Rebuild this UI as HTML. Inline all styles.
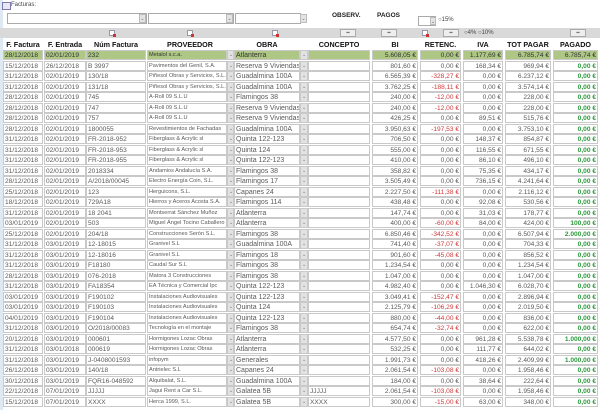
<!DOCTYPE html>
<html><head><meta charset="utf-8"><style>
body{margin:0;width:600px;height:410px;overflow:hidden;background:#fff;font-family:"Liberation Sans",sans-serif;position:relative}
.a{position:absolute}
.t{font-size:6px;color:#444;top:2px;left:11px}
.inp{position:absolute;border:1px solid #aaa;background:#fff;box-sizing:border-box}
.dd{position:absolute;background:#e4e4e4;border:1px solid #bbb;box-sizing:border-box;font-size:5px;color:#666;text-align:center;line-height:8px}
.band{position:absolute;left:0;top:28px;width:600px;height:10px;background:#d9d9d9}
.btn{position:absolute;top:29px;width:16px;height:8px;border:1px solid #aaa;background:#eee;box-sizing:border-box;font-size:5px;text-align:center;line-height:6px;color:#555}
.ico{position:absolute;top:30px;width:6px;height:6px;background:#fff;border:1px solid #99a;box-sizing:border-box}
.ico:after{content:"";position:absolute;right:-2px;bottom:-2px;width:3px;height:3px;background:#c33}
.h{position:absolute;top:40px;font-size:7.2px;font-weight:bold;color:#111;text-align:center}
.r{position:absolute;left:0;width:600px;height:10.5px}
.r div{position:absolute;top:0;height:10px;border:1px solid #c9c9c9;box-sizing:border-box;background:#fff;font-size:6.6px;line-height:9px;color:#5a5a5a;white-space:nowrap;overflow:hidden;padding:0 1px}
.r .c1{left:3px;width:40px}.r .c2{left:44px;width:42px}.r .c3{left:86px;width:60px}
.r .c4{left:147px;width:80px;font-size:5.6px}.r .d1{left:227px;width:7px;background:#e2e2e2;color:#777;font-size:5px;text-align:center}
.r .c5{left:234px;width:66px;font-size:7px}.r .d2{left:300px;width:8px;background:#e2e2e2;color:#777;font-size:5px;text-align:center}
.r .c6{left:308px;width:62px}
.r .c7{left:372px;width:46px;text-align:right}.r .c8{left:420px;width:41px;text-align:right}
.r .c9{left:463px;width:40px;text-align:right}.r .c10{left:505px;width:46px;text-align:right}
.r .c11{left:553px;width:45px;text-align:right;color:#2a9a3a;font-weight:bold}
.r .n{color:#d03a3a}
.g div{background:#aec784;color:#333}.g .c11{color:#333;font-weight:normal}
.g .d1,.g .d2{background:#e2e2e2}
</style></head><body>
<div class="a" style="left:0;top:0;width:3px;height:410px;background:#dfe9f3"></div>
<div class="a" style="left:2px;top:2px;width:7px;height:6px;border:1px solid #7a7ab0;background:#e8e8f4"></div>
<div class="a t">Facturas:</div>
<div class="inp" style="left:7px;top:13px;width:140px;height:11px"></div>
<div class="dd" style="left:139px;top:14px;width:7px;height:9px">⌄</div>
<div class="inp" style="left:148px;top:13px;width:86px;height:11px"></div>
<div class="dd" style="left:226px;top:14px;width:7px;height:9px">⌄</div>
<div class="inp" style="left:235px;top:13px;width:66px;height:11px"></div>
<div class="dd" style="left:300px;top:14px;width:7px;height:9px">⌄</div>
<div class="a" style="left:332px;top:12px;font-size:6.5px;font-weight:bold;color:#222">OBSERV.</div>
<div class="a" style="left:377px;top:12px;font-size:6.5px;font-weight:bold;color:#222">PAGOS</div>
<div class="inp" style="left:418px;top:16px;width:18px;height:10px"></div>
<div class="dd" style="left:430px;top:17px;width:6px;height:8px">⌄</div>
<div class="a" style="left:438px;top:17px;font-size:6px;color:#444">○15%</div>
<div class="band"></div>
<div class="ico" style="left:109px"></div><div class="ico" style="left:187px"></div><div class="ico" style="left:272px"></div><div class="ico" style="left:422px"></div>
<div class="btn" style="left:340px">▪▪</div><div class="btn" style="left:381px">▪▪</div><div class="btn" style="left:443px">▪▪</div><div class="btn" style="left:570px">▪▪</div>
<div class="a" style="left:464px;top:30px;font-size:6px;color:#444">○4% ○10%</div>
<div class="h" style="left:3px;width:40px">F. Factura</div>
<div class="h" style="left:44px;width:42px">F. Entrada</div>
<div class="h" style="left:86px;width:60px">Núm Factura</div>
<div class="h" style="left:147px;width:86px">PROVEEDOR</div>
<div class="h" style="left:234px;width:66px">OBRA</div>
<div class="h" style="left:308px;width:62px">CONCEPTO</div>
<div class="h" style="left:372px;width:46px">BI</div>
<div class="h" style="left:420px;width:41px">RETENC.</div>
<div class="h" style="left:463px;width:40px">IVA</div>
<div class="h" style="left:505px;width:46px">TOT PAGAR</div>
<div class="h" style="left:553px;width:45px">PAGADO</div>

<div class="r g" style="top:50px"><div class="c1">28/12/2018</div><div class="c2">02/01/2019</div><div class="c3">232</div><div class="c4">Metalol s.c.a.</div><div class="d1">⌄</div><div class="c5">Atlanterra</div><div class="d2">⌄</div><div class="c6"></div><div class="c7">5.608,05 €</div><div class="c8">0,00 €</div><div class="c9">1.177,69 €</div><div class="c10">6.785,74 €</div><div class="c11">6.785,74 €</div></div>
<div class="r" style="top:60.5px"><div class="c1">15/12/2018</div><div class="c2">26/12/2018</div><div class="c3">B 3997</div><div class="c4">Pavimentos del Genil, S.A.</div><div class="d1">⌄</div><div class="c5">Reserva 9 Viviendas</div><div class="d2">⌄</div><div class="c6"></div><div class="c7">801,60 €</div><div class="c8">0,00 €</div><div class="c9">168,34 €</div><div class="c10">969,94 €</div><div class="c11">0,00 €</div></div>
<div class="r" style="top:71px"><div class="c1">31/12/2018</div><div class="c2">02/01/2019</div><div class="c3">130/18</div><div class="c4">Piñesol Obras y Servicios, S.L.</div><div class="d1">⌄</div><div class="c5">Guadalmina 100A</div><div class="d2">⌄</div><div class="c6"></div><div class="c7">6.565,39 €</div><div class="c8 n">-328,27 €</div><div class="c9">0,00 €</div><div class="c10">6.237,12 €</div><div class="c11">0,00 €</div></div>
<div class="r" style="top:81.5px"><div class="c1">31/12/2018</div><div class="c2">02/01/2019</div><div class="c3">131/18</div><div class="c4">Piñesol Obras y Servicios, S.L.</div><div class="d1">⌄</div><div class="c5">Guadalmina 100A</div><div class="d2">⌄</div><div class="c6"></div><div class="c7">3.762,25 €</div><div class="c8 n">-188,11 €</div><div class="c9">0,00 €</div><div class="c10">3.574,14 €</div><div class="c11">0,00 €</div></div>
<div class="r" style="top:92px"><div class="c1">28/12/2018</div><div class="c2">02/01/2019</div><div class="c3">745</div><div class="c4">A-Roll 09 S.L.U</div><div class="d1">⌄</div><div class="c5">Flamingos 38</div><div class="d2">⌄</div><div class="c6"></div><div class="c7">240,00 €</div><div class="c8 n">-12,00 €</div><div class="c9">0,00 €</div><div class="c10">228,00 €</div><div class="c11">0,00 €</div></div>
<div class="r" style="top:102.5px"><div class="c1">28/12/2018</div><div class="c2">02/01/2019</div><div class="c3">747</div><div class="c4">A-Roll 09 S.L.U</div><div class="d1">⌄</div><div class="c5">Reserva 9 Viviendas</div><div class="d2">⌄</div><div class="c6"></div><div class="c7">240,00 €</div><div class="c8 n">-12,00 €</div><div class="c9">0,00 €</div><div class="c10">228,00 €</div><div class="c11">0,00 €</div></div>
<div class="r" style="top:113px"><div class="c1">28/12/2018</div><div class="c2">02/01/2019</div><div class="c3">757</div><div class="c4">A-Roll 09 S.L.U</div><div class="d1">⌄</div><div class="c5">Reserva 9 Viviendas</div><div class="d2">⌄</div><div class="c6"></div><div class="c7">426,25 €</div><div class="c8">0,00 €</div><div class="c9">89,51 €</div><div class="c10">515,76 €</div><div class="c11">0,00 €</div></div>
<div class="r" style="top:123.5px"><div class="c1">28/12/2018</div><div class="c2">02/01/2019</div><div class="c3">1800055</div><div class="c4">Revestimientos de Fachadas</div><div class="d1">⌄</div><div class="c5">Guadalmina 100A</div><div class="d2">⌄</div><div class="c6"></div><div class="c7">3.950,63 €</div><div class="c8 n">-197,53 €</div><div class="c9">0,00 €</div><div class="c10">3.753,10 €</div><div class="c11">0,00 €</div></div>
<div class="r" style="top:134px"><div class="c1">31/12/2018</div><div class="c2">02/01/2019</div><div class="c3">FR-2018-952</div><div class="c4">Fiberglass &amp; Acrylic sl</div><div class="d1">⌄</div><div class="c5">Quinta 122-123</div><div class="d2">⌄</div><div class="c6"></div><div class="c7">706,50 €</div><div class="c8">0,00 €</div><div class="c9">148,37 €</div><div class="c10">854,87 €</div><div class="c11">0,00 €</div></div>
<div class="r" style="top:144.5px"><div class="c1">31/12/2018</div><div class="c2">02/01/2019</div><div class="c3">FR-2018-953</div><div class="c4">Fiberglass &amp; Acrylic sl</div><div class="d1">⌄</div><div class="c5">Quinta 124</div><div class="d2">⌄</div><div class="c6"></div><div class="c7">555,00 €</div><div class="c8">0,00 €</div><div class="c9">116,55 €</div><div class="c10">671,55 €</div><div class="c11">0,00 €</div></div>
<div class="r" style="top:155px"><div class="c1">31/12/2018</div><div class="c2">02/01/2019</div><div class="c3">FR-2018-955</div><div class="c4">Fiberglass &amp; Acrylic sl</div><div class="d1">⌄</div><div class="c5">Quinta 122-123</div><div class="d2">⌄</div><div class="c6"></div><div class="c7">410,00 €</div><div class="c8">0,00 €</div><div class="c9">86,10 €</div><div class="c10">496,10 €</div><div class="c11">0,00 €</div></div>
<div class="r" style="top:165.5px"><div class="c1">31/12/2018</div><div class="c2">02/01/2019</div><div class="c3">2018334</div><div class="c4">Andamios Andalucía S.A.</div><div class="d1">⌄</div><div class="c5">Flamingos 38</div><div class="d2">⌄</div><div class="c6"></div><div class="c7">358,82 €</div><div class="c8">0,00 €</div><div class="c9">75,35 €</div><div class="c10">434,17 €</div><div class="c11">0,00 €</div></div>
<div class="r" style="top:176px"><div class="c1">28/12/2018</div><div class="c2">02/01/2019</div><div class="c3">A/2018/00045</div><div class="c4">Electro Energía Coin, S.L.</div><div class="d1">⌄</div><div class="c5">Flamingos 17</div><div class="d2">⌄</div><div class="c6"></div><div class="c7">3.505,49 €</div><div class="c8">0,00 €</div><div class="c9">736,15 €</div><div class="c10">4.241,64 €</div><div class="c11">0,00 €</div></div>
<div class="r" style="top:186.5px"><div class="c1">25/12/2018</div><div class="c2">02/01/2019</div><div class="c3">123</div><div class="c4">Herguicons, S.L.</div><div class="d1">⌄</div><div class="c5">Capanes 24</div><div class="d2">⌄</div><div class="c6"></div><div class="c7">2.227,50 €</div><div class="c8 n">-111,38 €</div><div class="c9">0,00 €</div><div class="c10">2.116,12 €</div><div class="c11">0,00 €</div></div>
<div class="r" style="top:197px"><div class="c1">18/12/2018</div><div class="c2">02/01/2019</div><div class="c3">729A18</div><div class="c4">Hierros y Aceros Acosta S.A.</div><div class="d1">⌄</div><div class="c5">Flamingos 114</div><div class="d2">⌄</div><div class="c6"></div><div class="c7">438,48 €</div><div class="c8">0,00 €</div><div class="c9">92,08 €</div><div class="c10">530,56 €</div><div class="c11">0,00 €</div></div>
<div class="r" style="top:207.5px"><div class="c1">31/12/2018</div><div class="c2">02/01/2019</div><div class="c3">18 2041</div><div class="c4">Montserrat Sánchez Muñoz</div><div class="d1">⌄</div><div class="c5">Atlanterra</div><div class="d2">⌄</div><div class="c6"></div><div class="c7">147,74 €</div><div class="c8">0,00 €</div><div class="c9">31,03 €</div><div class="c10">178,77 €</div><div class="c11">0,00 €</div></div>
<div class="r" style="top:218px"><div class="c1">03/01/2019</div><div class="c2">02/01/2019</div><div class="c3">503</div><div class="c4">Miguel Ángel Tocino Caballero</div><div class="d1">⌄</div><div class="c5">Atlanterra</div><div class="d2">⌄</div><div class="c6"></div><div class="c7">400,00 €</div><div class="c8 n">-60,00 €</div><div class="c9">84,00 €</div><div class="c10">424,00 €</div><div class="c11">100,00 €</div></div>
<div class="r" style="top:228.5px"><div class="c1">25/12/2018</div><div class="c2">02/01/2019</div><div class="c3">204/18</div><div class="c4">Construcciones Serón S.L.</div><div class="d1">⌄</div><div class="c5">Flamingos 38</div><div class="d2">⌄</div><div class="c6"></div><div class="c7">6.850,46 €</div><div class="c8 n">-342,52 €</div><div class="c9">0,00 €</div><div class="c10">6.507,94 €</div><div class="c11">2.000,00 €</div></div>
<div class="r" style="top:239px"><div class="c1">31/12/2018</div><div class="c2">03/01/2019</div><div class="c3">12-18015</div><div class="c4">Granivel S.L</div><div class="d1">⌄</div><div class="c5">Guadalmina 100A</div><div class="d2">⌄</div><div class="c6"></div><div class="c7">741,40 €</div><div class="c8 n">-37,07 €</div><div class="c9">0,00 €</div><div class="c10">704,33 €</div><div class="c11">0,00 €</div></div>
<div class="r" style="top:249.5px"><div class="c1">31/12/2018</div><div class="c2">03/01/2019</div><div class="c3">12-18016</div><div class="c4">Granivel S.L</div><div class="d1">⌄</div><div class="c5">Flamingos 18</div><div class="d2">⌄</div><div class="c6"></div><div class="c7">901,60 €</div><div class="c8 n">-45,08 €</div><div class="c9">0,00 €</div><div class="c10">856,52 €</div><div class="c11">0,00 €</div></div>
<div class="r" style="top:260px"><div class="c1">31/12/2018</div><div class="c2">03/01/2019</div><div class="c3">F18180</div><div class="c4">Caudal Sur S.L</div><div class="d1">⌄</div><div class="c5">Flamingos 38</div><div class="d2">⌄</div><div class="c6"></div><div class="c7">1.234,54 €</div><div class="c8">0,00 €</div><div class="c9">0,00 €</div><div class="c10">1.234,54 €</div><div class="c11">0,00 €</div></div>
<div class="r" style="top:270.5px"><div class="c1">28/12/2018</div><div class="c2">03/01/2019</div><div class="c3">076-2018</div><div class="c4">Matora 3 Construcciones</div><div class="d1">⌄</div><div class="c5">Flamingos 38</div><div class="d2">⌄</div><div class="c6"></div><div class="c7">1.047,00 €</div><div class="c8">0,00 €</div><div class="c9">0,00 €</div><div class="c10">1.047,00 €</div><div class="c11">0,00 €</div></div>
<div class="r" style="top:281px"><div class="c1">31/12/2018</div><div class="c2">03/01/2019</div><div class="c3">FA18354</div><div class="c4">EA Técnica y Comercial Ipc</div><div class="d1">⌄</div><div class="c5">Quinta 122-123</div><div class="d2">⌄</div><div class="c6"></div><div class="c7">4.982,40 €</div><div class="c8">0,00 €</div><div class="c9">1.046,30 €</div><div class="c10">6.028,70 €</div><div class="c11">0,00 €</div></div>
<div class="r" style="top:291.5px"><div class="c1">03/01/2019</div><div class="c2">03/01/2019</div><div class="c3">F190102</div><div class="c4">Instalaciones Audiovisuales</div><div class="d1">⌄</div><div class="c5">Quinta 122-123</div><div class="d2">⌄</div><div class="c6"></div><div class="c7">3.049,41 €</div><div class="c8 n">-152,47 €</div><div class="c9">0,00 €</div><div class="c10">2.896,94 €</div><div class="c11">0,00 €</div></div>
<div class="r" style="top:302px"><div class="c1">03/01/2019</div><div class="c2">03/01/2019</div><div class="c3">F190103</div><div class="c4">Instalaciones Audiovisuales</div><div class="d1">⌄</div><div class="c5">Quinta 124</div><div class="d2">⌄</div><div class="c6"></div><div class="c7">2.125,79 €</div><div class="c8 n">-106,29 €</div><div class="c9">0,00 €</div><div class="c10">2.019,50 €</div><div class="c11">0,00 €</div></div>
<div class="r" style="top:312.5px"><div class="c1">04/01/2019</div><div class="c2">03/01/2019</div><div class="c3">F190104</div><div class="c4">Instalaciones Audiovisuales</div><div class="d1">⌄</div><div class="c5">Quinta 122-123</div><div class="d2">⌄</div><div class="c6"></div><div class="c7">880,00 €</div><div class="c8 n">-44,00 €</div><div class="c9">0,00 €</div><div class="c10">836,00 €</div><div class="c11">0,00 €</div></div>
<div class="r" style="top:323px"><div class="c1">31/12/2018</div><div class="c2">03/01/2019</div><div class="c3">O/2018/00083</div><div class="c4">Tecnología en el montaje</div><div class="d1">⌄</div><div class="c5">Flamingos 38</div><div class="d2">⌄</div><div class="c6"></div><div class="c7">654,74 €</div><div class="c8 n">-32,74 €</div><div class="c9">0,00 €</div><div class="c10">622,00 €</div><div class="c11">0,00 €</div></div>
<div class="r" style="top:333.5px"><div class="c1">20/12/2018</div><div class="c2">03/01/2019</div><div class="c3">000601</div><div class="c4">Hormigones Lozac Obras</div><div class="d1">⌄</div><div class="c5">Atlanterra</div><div class="d2">⌄</div><div class="c6"></div><div class="c7">4.577,50 €</div><div class="c8">0,00 €</div><div class="c9">961,28 €</div><div class="c10">5.538,78 €</div><div class="c11">1.000,00 €</div></div>
<div class="r" style="top:344px"><div class="c1">31/12/2018</div><div class="c2">03/01/2018</div><div class="c3">000619</div><div class="c4">Hormigones Lozac Obras</div><div class="d1">⌄</div><div class="c5">Atlanterra</div><div class="d2">⌄</div><div class="c6"></div><div class="c7">532,25 €</div><div class="c8">0,00 €</div><div class="c9">111,77 €</div><div class="c10">644,02 €</div><div class="c11">0,00 €</div></div>
<div class="r" style="top:354.5px"><div class="c1">31/12/2018</div><div class="c2">03/01/2019</div><div class="c3">J-0408001593</div><div class="c4">infopym</div><div class="d1">⌄</div><div class="c5">Generales</div><div class="d2">⌄</div><div class="c6"></div><div class="c7">1.991,73 €</div><div class="c8">0,00 €</div><div class="c9">418,26 €</div><div class="c10">2.409,99 €</div><div class="c11">1.000,00 €</div></div>
<div class="r" style="top:365px"><div class="c1">26/12/2018</div><div class="c2">03/01/2019</div><div class="c3">140/18</div><div class="c4">Antrielec S.L</div><div class="d1">⌄</div><div class="c5">Capanes 24</div><div class="d2">⌄</div><div class="c6"></div><div class="c7">2.061,54 €</div><div class="c8 n">-103,08 €</div><div class="c9">0,00 €</div><div class="c10">1.958,46 €</div><div class="c11">0,00 €</div></div>
<div class="r" style="top:375.5px"><div class="c1">30/12/2018</div><div class="c2">03/01/2019</div><div class="c3">FQR16-048592</div><div class="c4">Alquibalat, S.L.</div><div class="d1">⌄</div><div class="c5">Guadalmina 100A</div><div class="d2">⌄</div><div class="c6"></div><div class="c7">184,00 €</div><div class="c8">0,00 €</div><div class="c9">38,64 €</div><div class="c10">222,64 €</div><div class="c11">0,00 €</div></div>
<div class="r" style="top:386px"><div class="c1">22/12/2018</div><div class="c2">07/01/2019</div><div class="c3">JJJJJ</div><div class="c4">Jagui Rent a Car S.L.</div><div class="d1">⌄</div><div class="c5">Galatea 5B</div><div class="d2">⌄</div><div class="c6">JJJJJ</div><div class="c7">2.061,54 €</div><div class="c8 n">-103,08 €</div><div class="c9">0,00 €</div><div class="c10">1.958,46 €</div><div class="c11">0,00 €</div></div>
<div class="r" style="top:396.5px"><div class="c1">15/12/2018</div><div class="c2">07/01/2019</div><div class="c3">XXXX</div><div class="c4">Herca 1999, S.L.</div><div class="d1">⌄</div><div class="c5">Galatea 5B</div><div class="d2">⌄</div><div class="c6">XXXX</div><div class="c7">300,00 €</div><div class="c8 n">-15,00 €</div><div class="c9">63,00 €</div><div class="c10">348,00 €</div><div class="c11">0,00 €</div></div>
</body></html>
